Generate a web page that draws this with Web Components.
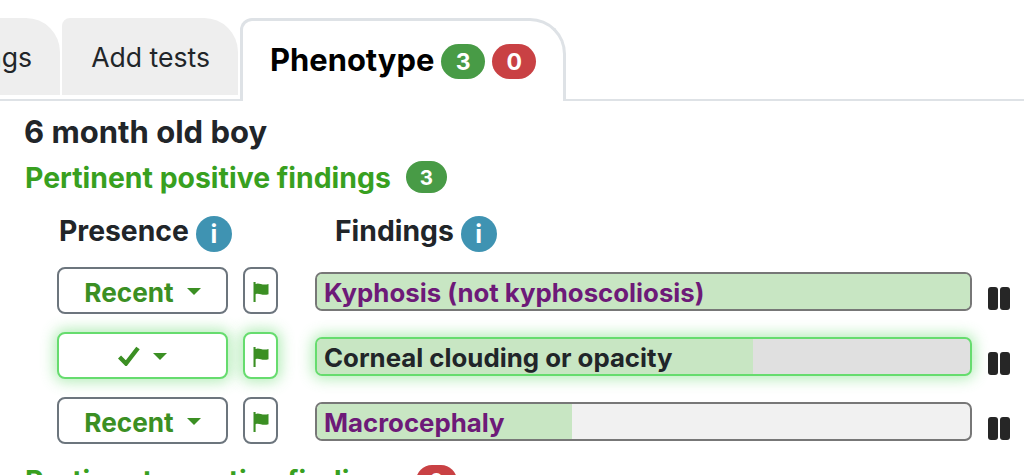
<!DOCTYPE html>
<html>
<head>
<meta charset="utf-8">
<title>Phenotype</title>
<style>
  html, body { margin: 0; height: 100%; overflow: hidden; background: #fff; }
  body { font-family: Inter, "Liberation Sans", sans-serif; color: #212529; }
</style>
</head>
<body>
<phenotype-page></phenotype-page>
<script>
class CountBadge extends HTMLElement {
  constructor () {
    super()
    this.attachShadow({ mode: 'open' }).innerHTML = /*html*/`
      <style>
        :host {
          display: inline-flex; align-items: center; justify-content: center;
          height: var(--badge-h, 35px); width: var(--badge-w, 44px);
          border-radius: 18px; color: #fff; font-weight: 700;
          font-size: var(--badge-size, 23px);
          background: #489b46;
        }
        :host([tone="red"]) { background: #c94144; }
      </style>
      <slot></slot>`
  }
}

class TabBar extends HTMLElement {
  constructor () {
    super()
    this.attachShadow({ mode: 'open' }).innerHTML = /*html*/`
      <style>
        :host {
          display: flex; align-items: flex-end; height: 101px; box-sizing: border-box;
          border-bottom: 2px solid #dee2e6; font-size: 26.6px;
          margin-left: -118px;
        }
        .tab {
          box-sizing: border-box; height: 77px; margin-bottom: 4px; margin-right: 2px;
          background: #eeeeee; border-radius: 8px 34px 0 0;
          display: flex; align-items: center; justify-content: flex-end; padding: 0 28px 0 0;
          color: #212529;
        }
        .first { width: 178px; }
        .second { width: 176px; }
        .active {
          box-sizing: border-box; height: 83px; width: 326px; margin-bottom: -2px;
          background: #fff; border: 3px solid #dee2e6; border-bottom: 0;
          border-radius: 12px 36px 0 0; display: flex; align-items: center;
          padding: 0 0 4px 27px; gap: 7px; font-weight: 700; color: #000; font-size: 30.9px;
        }
        .active count-badge { margin-top: 5px; }
      </style>
      <div class="tab first">Findings</div>
      <div class="tab second">Add tests</div>
      <div class="active">
        <span class="label">Phenotype</span>
        <count-badge>3</count-badge>
        <count-badge tone="red">0</count-badge>
      </div>`
  }
}

class InfoDot extends HTMLElement {
  constructor () {
    super()
    this.attachShadow({ mode: 'open' }).innerHTML = /*html*/`
      <style>
        :host {
          display: inline-flex; align-items: center; justify-content: center;
          width: 36px; height: 36px; border-radius: 50%; background: #3f93b2;
          color: #fff; font-weight: 700; font-size: 25px; margin-top: 5px;
        }
      </style>
      i`
  }
}

class FindingRow extends HTMLElement {
  constructor () {
    super()
    this.shadow = this.attachShadow({ mode: 'open' })
  }

  connectedCallback () {
    const fill = this.getAttribute('fill')
    const track = this.getAttribute('track') || '#c8e6c3'
    const presence = this.getAttribute('presence')
    const tick = `<svg class="tick" viewBox="0 0 22 20" width="22" height="20"><path d="M1.5 11 L8 17.5 L20 2" fill="none" stroke="#3b8f23" stroke-width="4.4"/></svg>`
    this.shadow.innerHTML = /*html*/`
      <style>
        :host { display: flex; align-items: center; height: 46.5px; padding-left: 57px; }
        .presence {
          box-sizing: border-box; width: 171px; height: 46.5px; border: 2px solid #6c757d; padding-top: 4px;
          border-radius: 8px; display: flex; align-items: center; justify-content: center;
          gap: 13px; color: #3b8f23; font-weight: 700; font-size: 26.2px; background: #fff;
        }
        .caret {
          width: 0; height: 0; margin-top: -1px;
          border-left: 7.5px solid transparent; border-right: 7.5px solid transparent;
          border-top: 7.5px solid #3b8f23;
        }
        .tick { margin-top: -3px; }
        .flag {
          box-sizing: border-box; width: 35px; height: 46.5px; margin-left: 15px; border: 2px solid #6c757d; padding-top: 3px;
          border-radius: 8px; display: flex; align-items: center; justify-content: center; background: #fff;
        }
        .bar {
          box-sizing: border-box; width: 657px; height: 39px; margin: 2px 0 0 37px; border: 2px solid #777;
          border-radius: 7px; background: ${track}; overflow: hidden; position: relative;
          display: flex; align-items: center; padding: 2px 0 0 7px;
          font-size: 25.8px; font-weight: 700; color: #6d1a78;
        }
        .fill { position: absolute; left: 0; top: 0; bottom: 0; width: ${fill}; background: #c8e6c3; }
        .name { position: relative; }
        .pause { margin: 16px 0 0 16px; display: block; flex: none; }
        :host([active]) .presence, :host([active]) .flag, :host([active]) .bar {
          border-color: #66dc6e; box-shadow: 0 0 14px 3px rgba(90, 215, 100, .45);
        }
        :host([active]) .bar { color: #212529; }
      </style>
      <div class="presence">${presence ? presence : tick}<span class="caret"></span></div>
      <div class="flag">
        <svg viewBox="0 0 18 22" width="18" height="22"><path d="M1.5 1 L3.6 1 L3.6 3 C7 1 10 5 16.5 3 L16.5 13.2 C10 15.2 7 11.4 3.6 13.2 L3.6 21 L1.5 21 Z" fill="#3b8f23"/></svg>
      </div>
      <div class="bar"><span class="fill"></span><span class="name"><slot></slot></span></div>
      <svg class="pause" viewBox="0 0 22 23" width="22" height="23">
        <rect x="0" y="0" width="10" height="23" rx="3" fill="#262626"/>
        <rect x="12" y="0" width="10" height="23" rx="3" fill="#262626"/>
      </svg>`
  }
}

class SectionHeading extends HTMLElement {
  constructor () {
    super()
    this.attachShadow({ mode: 'open' }).innerHTML = /*html*/`
      <style>
        :host {
          display: flex; align-items: center; gap: 15px; padding-left: 25px; height: 34px;
          color: #38a01f; font-size: 28.4px; font-weight: 700;
          --badge-w: 41px; --badge-h: 32px; --badge-size: 20.5px;
        }
      </style>
      <slot></slot>`
  }
}

class PhenotypePage extends HTMLElement {
  constructor () {
    super()
    this.shadow = this.attachShadow({ mode: 'open' })
    this.data = [
      { name: 'Kyphosis (not kyphoscoliosis)', presence: 'Recent', fill: '100%' },
      { name: 'Corneal clouding or opacity', presence: '', fill: '66.8%', track: '#e0e0e0', active: true },
      { name: 'Macrocephaly', presence: 'Recent', fill: '39.1%', track: '#f1f1f1' }
    ]
  }

  connectedCallback () {
    this.shadow.innerHTML = /*html*/`
      <style>
        :host { display: block; }
        h1 { margin: 13px 0 0 24px; font-size: 31px; line-height: 36px; font-weight: 700; color: #212529; }
        section-heading { margin-top: 10px; }
        .columns { display: flex; align-items: center; height: 40px; margin-top: 17px; font-size: 28.3px; font-weight: 700; color: #212529; }
        .col { display: flex; align-items: center; gap: 7px; }
        .presence { margin-left: 59px; width: 276px; }
        .rows { display: flex; flex-direction: column; gap: 18.5px; margin-top: 16px; }
        .next { margin-top: 20px; }
      </style>
      <tab-bar></tab-bar>
      <h1>6 month old boy</h1>
      <section-heading>Pertinent positive findings <count-badge>3</count-badge></section-heading>
      <div class="columns">
        <div class="col presence">Presence <info-dot></info-dot></div>
        <div class="col">Findings <info-dot></info-dot></div>
      </div>
      <div class="rows"></div>
      <section-heading class="next">Pertinent negative findings <count-badge tone="red">0</count-badge></section-heading>`

    const rows = this.shadow.querySelector('.rows')
    this.data.forEach(item => {
      const row = document.createElement('finding-row')
      row.setAttribute('presence', item.presence)
      row.setAttribute('fill', item.fill)
      if (item.track) row.setAttribute('track', item.track)
      if (item.active) row.setAttribute('active', '')
      row.textContent = item.name
      rows.appendChild(row)
    })
  }
}

customElements.define('count-badge', CountBadge)
customElements.define('tab-bar', TabBar)
customElements.define('info-dot', InfoDot)
customElements.define('finding-row', FindingRow)
customElements.define('section-heading', SectionHeading)
customElements.define('phenotype-page', PhenotypePage)
</script>
</body>
</html>
